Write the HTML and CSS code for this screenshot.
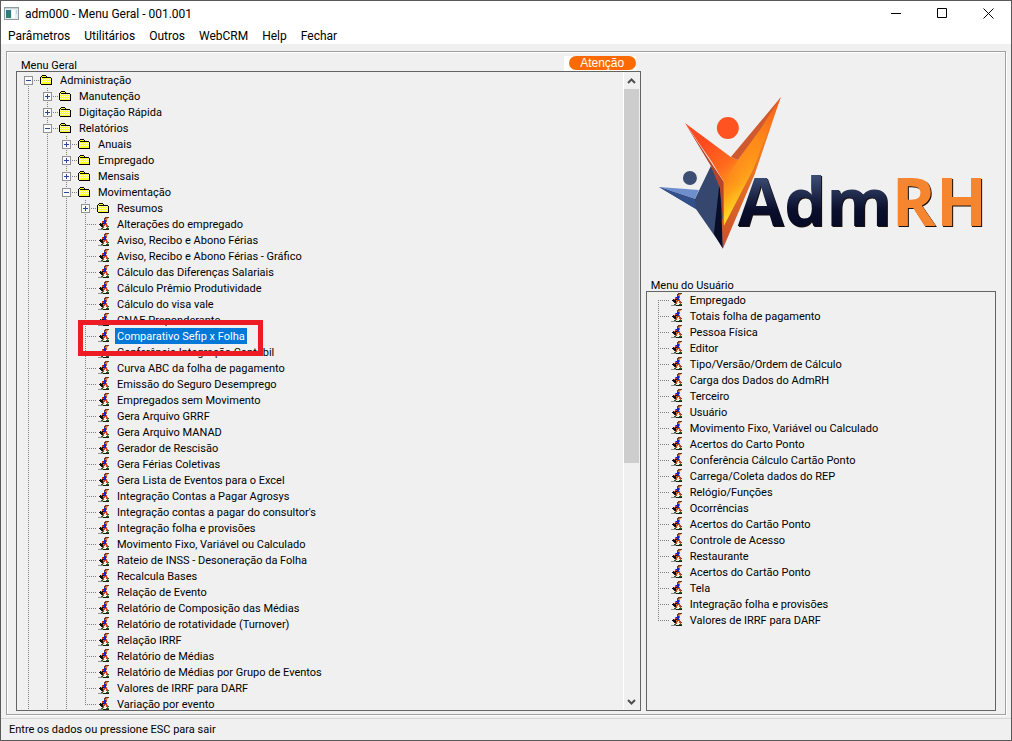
FILE: index.html
```html
<!DOCTYPE html>
<html lang="pt-BR">
<head>
<meta charset="utf-8">
<title>adm000 - Menu Geral - 001.001</title>
<link rel="stylesheet" href="styles.css">
</head>
<body>
<svg class="sprite" aria-hidden="true">
  <symbol id="folder" viewBox="0 0 12 10">
    <path fill="#000" d="M2 0h4v1h1v1h4v1h1v7H1V9H0V2h1V1h1z"/>
    <path fill="#ffff20" d="M2 1h4v1h1v1h4v6H1V2h1z"/>
    <path fill="#000" d="M2 2h5v1H2z"/>
    <path fill="#ffffd0" d="M2 4h1v1H2zM4 4h1v1H4zM6 4h1v1H6zM8 4h1v1H8zM10 4h1v1h-1zM3 5h1v1H3zM5 5h1v1H5zM7 5h1v1H7zM9 5h1v1H9zM2 6h1v1H2zM4 6h1v1H4zM6 6h1v1H6zM8 6h1v1H8zM10 6h1v1h-1zM3 7h1v1H3zM5 7h1v1H5zM7 7h1v1H7zM9 7h1v1H9zM1 3h1v1H1zM1 5h1v1H1zM1 7h1v1H1zM3 3h1v1H3zM5 3h1v1H5zM7 3h1v1H7zM9 3h1v1H9z"/>
  </symbol>
  <symbol id="runner" viewBox="0 0 12 13">
    <path fill="#6a3a18" d="M7 0h4v1H7zM6 1h4v1H6zM6 2h1v1H6z"/>
    <path fill="#e08040" d="M8 1h2v1H8zM7 2h2v1H7zM3 6h1v1H3zM5 7h1v1H5z"/>
    <path fill="#1020e0" d="M6 3h2v1H6zM5 4h3v1H5zM6 5h2v1H6zM6 6h2v1H6z"/>
    <path fill="#e04018" d="M8 3h1v2H8zM4 4h1v2H4zM5 5h1v1H5zM7 7h2v1H7zM8 8h2v1H8zM8 6h1v1H8z"/>
    <path fill="#101010" d="M2 6h1v1H2zM4 6h2v1H4zM1 7h4v1H1zM2 8h3v1H2zM3 9h2v1H3z"/>
    <path fill="#b04a18" d="M6 7h1v2H6zM5 8h1v2H5zM4 10h2v1H4zM8 9h2v1H8zM9 10h1v1H9z"/>
    <path fill="#206020" d="M3 11h2v1H3zM8 11h3v1H8zM10 9h1v1h-1z"/>
    <path fill="#909090" d="M0 12h5v1H0z"/>
    <path fill="#102010" d="M5 12h6v1H5z"/>
  </symbol>
  <symbol id="plus" viewBox="0 0 9 9">
    <path fill="#919191" d="M0 0h9v9H0z"/><path fill="#fafafa" d="M1 1h7v7H1z"/>
    <path fill="#2b4a9c" d="M2 4h5v1H2zM4 2h1v5H4z"/>
  </symbol>
  <symbol id="minus" viewBox="0 0 9 9">
    <path fill="#919191" d="M0 0h9v9H0z"/><path fill="#fafafa" d="M1 1h7v7H1z"/>
    <path fill="#2b4a9c" d="M2 4h5v1H2z"/>
  </symbol>
</svg>
<div class="window">
  <header class="titlebar">
    <svg class="app-icon" viewBox="0 0 15 13" aria-hidden="true">
      <path fill="#8d9aa0" d="M0 0h15v13H0z"/><path fill="#e6edf2" d="M1 2h13v10H1z"/>
      <path fill="#c9d3da" d="M1 1h13v1H1z"/><path fill="#2f7f74" d="M2 3h5v8H2z"/>
      <path fill="#3b6aa0" d="M2 3h2v4H2z"/><path fill="#fff" d="M8 3h3v8H8z"/><path fill="#b8d4ea" d="M12 3h1v4h-1z"/>
    </svg>
    <h1 class="title">adm000 - Menu Geral - 001.001</h1>
    <div class="controls">
      <button type="button" aria-label="Minimizar"><svg viewBox="0 0 11 11"><path d="M0 5.5h10"/></svg></button>
      <button type="button" aria-label="Maximizar"><svg viewBox="0 0 11 11"><path d="M.5 .5h9v9h-9z"/></svg></button>
      <button type="button" aria-label="Fechar janela"><svg viewBox="0 0 11 11"><path d="M.5 .5l10 10M10.500 .5l-10 10"/></svg></button>
    </div>
  </header>
  <nav class="menubar">
    <button type="button">Parâmetros</button><button type="button">Utilitários</button><button type="button">Outros</button><button type="button">WebCRM</button><button type="button">Help</button><button type="button">Fechar</button>
  </nav>
  <main class="frame">
    <section class="general">
      <div class="panel-head">
        <h2>Menu Geral</h2>
        <div class="alert-wrap"><button type="button" class="alert">Atenção</button></div>
      </div>
      <div class="box">
        <div class="viewport">
          <ul class="tree">
            <li class="root"><div class="row"><svg class="exp"><use href="#minus"/></svg><svg class="folder"><use href="#folder"/></svg><span class="label">Administração</span></div>
              <ul>
                <li><div class="row"><svg class="exp"><use href="#plus"/></svg><svg class="folder"><use href="#folder"/></svg><span class="label">Manutenção</span></div></li>
                <li><div class="row"><svg class="exp"><use href="#plus"/></svg><svg class="folder"><use href="#folder"/></svg><span class="label">Digitação Rápida</span></div></li>
                <li><div class="row"><svg class="exp"><use href="#minus"/></svg><svg class="folder"><use href="#folder"/></svg><span class="label">Relatórios</span></div>
                  <ul>
                    <li><div class="row"><svg class="exp"><use href="#plus"/></svg><svg class="folder"><use href="#folder"/></svg><span class="label">Anuais</span></div></li>
                    <li><div class="row"><svg class="exp"><use href="#plus"/></svg><svg class="folder"><use href="#folder"/></svg><span class="label">Empregado</span></div></li>
                    <li><div class="row"><svg class="exp"><use href="#plus"/></svg><svg class="folder"><use href="#folder"/></svg><span class="label">Mensais</span></div></li>
                    <li><div class="row"><svg class="exp"><use href="#minus"/></svg><svg class="folder"><use href="#folder"/></svg><span class="label">Movimentação</span></div>
                      <ul>
                        <li><div class="row"><svg class="exp"><use href="#plus"/></svg><svg class="folder"><use href="#folder"/></svg><span class="label">Resumos</span></div></li>
                        <li><div class="row leaf"><svg class="runner"><use href="#runner"/></svg><span class="label">Alterações do empregado</span></div></li>
                        <li><div class="row leaf"><svg class="runner"><use href="#runner"/></svg><span class="label">Aviso, Recibo e Abono Férias</span></div></li>
                        <li><div class="row leaf"><svg class="runner"><use href="#runner"/></svg><span class="label">Aviso, Recibo e Abono Férias - Gráfico</span></div></li>
                        <li><div class="row leaf"><svg class="runner"><use href="#runner"/></svg><span class="label">Cálculo das Diferenças Salariais</span></div></li>
                        <li><div class="row leaf"><svg class="runner"><use href="#runner"/></svg><span class="label">Cálculo Prêmio Produtividade</span></div></li>
                        <li><div class="row leaf"><svg class="runner"><use href="#runner"/></svg><span class="label">Cálculo do visa vale</span></div></li>
                        <li><div class="row leaf"><svg class="runner"><use href="#runner"/></svg><span class="label">CNAE Preponderante</span></div></li>
                        <li class="marked"><div class="row leaf"><svg class="runner"><use href="#runner"/></svg><span class="label selected">Comparativo Sefip x Folha</span></div></li>
                        <li><div class="row leaf"><svg class="runner"><use href="#runner"/></svg><span class="label">Conferência Integração Contábil</span></div></li>
                        <li><div class="row leaf"><svg class="runner"><use href="#runner"/></svg><span class="label">Curva ABC da folha de pagamento</span></div></li>
                        <li><div class="row leaf"><svg class="runner"><use href="#runner"/></svg><span class="label">Emissão do Seguro Desemprego</span></div></li>
                        <li><div class="row leaf"><svg class="runner"><use href="#runner"/></svg><span class="label">Empregados sem Movimento</span></div></li>
                        <li><div class="row leaf"><svg class="runner"><use href="#runner"/></svg><span class="label">Gera Arquivo GRRF</span></div></li>
                        <li><div class="row leaf"><svg class="runner"><use href="#runner"/></svg><span class="label">Gera Arquivo MANAD</span></div></li>
                        <li><div class="row leaf"><svg class="runner"><use href="#runner"/></svg><span class="label">Gerador de Rescisão</span></div></li>
                        <li><div class="row leaf"><svg class="runner"><use href="#runner"/></svg><span class="label">Gera Férias Coletivas</span></div></li>
                        <li><div class="row leaf"><svg class="runner"><use href="#runner"/></svg><span class="label">Gera Lista de Eventos para o Excel</span></div></li>
                        <li><div class="row leaf"><svg class="runner"><use href="#runner"/></svg><span class="label">Integração Contas a Pagar Agrosys</span></div></li>
                        <li><div class="row leaf"><svg class="runner"><use href="#runner"/></svg><span class="label">Integração contas a pagar do consultor's</span></div></li>
                        <li><div class="row leaf"><svg class="runner"><use href="#runner"/></svg><span class="label">Integração folha e provisões</span></div></li>
                        <li><div class="row leaf"><svg class="runner"><use href="#runner"/></svg><span class="label">Movimento Fixo, Variável ou Calculado</span></div></li>
                        <li><div class="row leaf"><svg class="runner"><use href="#runner"/></svg><span class="label">Rateio de INSS - Desoneração da Folha</span></div></li>
                        <li><div class="row leaf"><svg class="runner"><use href="#runner"/></svg><span class="label">Recalcula Bases</span></div></li>
                        <li><div class="row leaf"><svg class="runner"><use href="#runner"/></svg><span class="label">Relação de Evento</span></div></li>
                        <li><div class="row leaf"><svg class="runner"><use href="#runner"/></svg><span class="label">Relatório de Composição das Médias</span></div></li>
                        <li><div class="row leaf"><svg class="runner"><use href="#runner"/></svg><span class="label">Relatório de rotatividade (Turnover)</span></div></li>
                        <li><div class="row leaf"><svg class="runner"><use href="#runner"/></svg><span class="label">Relação IRRF</span></div></li>
                        <li><div class="row leaf"><svg class="runner"><use href="#runner"/></svg><span class="label">Relatório de Médias</span></div></li>
                        <li><div class="row leaf"><svg class="runner"><use href="#runner"/></svg><span class="label">Relatório de Médias por Grupo de Eventos</span></div></li>
                        <li><div class="row leaf"><svg class="runner"><use href="#runner"/></svg><span class="label">Valores de IRRF para DARF</span></div></li>
                        <li class="last"><div class="row leaf"><svg class="runner"><use href="#runner"/></svg><span class="label">Variação por evento</span></div></li>
                      </ul>
                    </li>
                  </ul>
                </li>
              </ul>
            </li>
          </ul>
        </div>
        <div class="scrollbar">
          <button type="button" aria-label="Rolar para cima"><svg viewBox="0 0 9 6"><path d="M1 5l3.500-3.500L8 5"/></svg></button>
          <div class="track"><div class="thumb"></div></div>
          <button type="button" aria-label="Rolar para baixo"><svg viewBox="0 0 9 6"><path d="M1 1l3.500 3.500L8 1"/></svg></button>
        </div>
      </div>
    </section>
    <section class="user">
      <div class="logo">
        <svg viewBox="0 0 330 160" role="img" aria-label="AdmRH">
          <defs>
            <linearGradient id="gNavy" x1="0" y1="0" x2="0" y2="1"><stop offset=".25" stop-color="#3a4a72"/><stop offset=".6" stop-color="#0a0f2c"/><stop offset="1" stop-color="#03041c"/></linearGradient>
            <linearGradient id="gFire" gradientUnits="userSpaceOnUse" x1="46" y1="50" x2="92" y2="102"><stop offset="0" stop-color="#ff4a20"/><stop offset=".4" stop-color="#ff6a1c"/><stop offset=".75" stop-color="#ff9f1a"/><stop offset="1" stop-color="#ffd420"/></linearGradient>
            <linearGradient id="gArm" gradientUnits="userSpaceOnUse" x1="122" y1="3" x2="82" y2="92"><stop offset="0" stop-color="#f4581f"/><stop offset=".5" stop-color="#ff8a18"/><stop offset="1" stop-color="#ffb81a" stop-opacity="0"/></linearGradient>
            <linearGradient id="gEdge" gradientUnits="userSpaceOnUse" x1="100" y1="60" x2="64" y2="155"><stop offset="0" stop-color="#f07a24"/><stop offset="1" stop-color="#c9502c"/></linearGradient>
          </defs>
          <path fill="#35476e" d="M0 93l36 12 16-33 12 20v62L37 115z"/>
          <path fill="#6f8fcc" d="M0 93l40 3-4 9z"/>
          <path fill="#33508a" d="M0 93l36 12 1 10z"/>
          <path fill="#080d28" d="M61 86l3 69-9-15z"/>
          <circle cx="31" cy="84" r="7" fill="#3d4e74"/>
          <path fill="#b8452a" d="M26 29l39 59v46l-4-40-9-22z"/>
          <path fill="url(#gEdge)" d="M122 3L96 80 64 155l-1-29z"/>
          <path fill="url(#gFire)" d="M122 3L79 66l-7-3-46-34 27 39 12 20v44l29-56z"/>
          <path fill="url(#gArm)" d="M122 3L79 66 65 88v44l29-56z"/>
          <path fill="#cf5a30" d="M122 3L72 63l7 3 22-30z"/>
          <circle cx="69" cy="34" r="11" fill="#ff5422"/>
          <text class="wordmark" x="79" y="132"><tspan fill="url(#gNavy)">Adm</tspan><tspan fill="#f5852f">RH</tspan></text>
        </svg>
      </div>
      <div class="panel-head"><h2>Menu do Usuário</h2></div>
      <div class="box">
        <div class="viewport">
          <ul class="tree">
            <li class="root"><div class="row leaf"><svg class="runner"><use href="#runner"/></svg><span class="label">Empregado</span></div></li>
            <li><div class="row leaf"><svg class="runner"><use href="#runner"/></svg><span class="label">Totais folha de pagamento</span></div></li>
            <li><div class="row leaf"><svg class="runner"><use href="#runner"/></svg><span class="label">Pessoa Física</span></div></li>
            <li><div class="row leaf"><svg class="runner"><use href="#runner"/></svg><span class="label">Editor</span></div></li>
            <li><div class="row leaf"><svg class="runner"><use href="#runner"/></svg><span class="label">Tipo/Versão/Ordem de Cálculo</span></div></li>
            <li><div class="row leaf"><svg class="runner"><use href="#runner"/></svg><span class="label">Carga dos Dados do AdmRH</span></div></li>
            <li><div class="row leaf"><svg class="runner"><use href="#runner"/></svg><span class="label">Terceiro</span></div></li>
            <li><div class="row leaf"><svg class="runner"><use href="#runner"/></svg><span class="label">Usuário</span></div></li>
            <li><div class="row leaf"><svg class="runner"><use href="#runner"/></svg><span class="label">Movimento Fixo, Variável ou Calculado</span></div></li>
            <li><div class="row leaf"><svg class="runner"><use href="#runner"/></svg><span class="label">Acertos do Carto Ponto</span></div></li>
            <li><div class="row leaf"><svg class="runner"><use href="#runner"/></svg><span class="label">Conferência Cálculo Cartão Ponto</span></div></li>
            <li><div class="row leaf"><svg class="runner"><use href="#runner"/></svg><span class="label">Carrega/Coleta dados do REP</span></div></li>
            <li><div class="row leaf"><svg class="runner"><use href="#runner"/></svg><span class="label">Relógio/Funções</span></div></li>
            <li><div class="row leaf"><svg class="runner"><use href="#runner"/></svg><span class="label">Ocorrências</span></div></li>
            <li><div class="row leaf"><svg class="runner"><use href="#runner"/></svg><span class="label">Acertos do Cartão Ponto</span></div></li>
            <li><div class="row leaf"><svg class="runner"><use href="#runner"/></svg><span class="label">Controle de Acesso</span></div></li>
            <li><div class="row leaf"><svg class="runner"><use href="#runner"/></svg><span class="label">Restaurante</span></div></li>
            <li><div class="row leaf"><svg class="runner"><use href="#runner"/></svg><span class="label">Acertos do Cartão Ponto</span></div></li>
            <li><div class="row leaf"><svg class="runner"><use href="#runner"/></svg><span class="label">Tela</span></div></li>
            <li><div class="row leaf"><svg class="runner"><use href="#runner"/></svg><span class="label">Integração folha e provisões</span></div></li>
            <li class="last"><div class="row leaf"><svg class="runner"><use href="#runner"/></svg><span class="label">Valores de IRRF para DARF</span></div></li>
          </ul>
        </div>
      </div>
    </section>
  </main>
  <footer class="status">Entre os dados ou pressione ESC para sair</footer>
</div>
</body>
</html>
```
FILE: styles.css
```css
*, *::before, *::after { box-sizing: border-box; }

body {
  margin: 0;
  color: #000;
  font: 11px/16px Roboto, "Liberation Sans", sans-serif;
}

button {
  padding: 0;
  border: 0;
  background: none;
  color: inherit;
  font: inherit;
}

h1, h2, ul { margin: 0; padding: 0; font: inherit; list-style: none; }

.sprite { position: absolute; width: 0; height: 0; }

.window {
  display: flex;
  flex-direction: column;
  height: 100vh;
  border: 1px solid #595959;
  background: #f0f0f0;
}

.titlebar {
  display: flex;
  align-items: center;
  height: 25px;
  padding-left: 3px;
  background: #fff;
}
.app-icon { width: 15px; height: 13px; }
.title { flex: 1; margin-left: 6px; font-size: 12px; }
.controls { display: flex; height: 100%; }
.controls button { width: 46px; display: flex; align-items: center; justify-content: center; }
.controls svg { width: 11px; height: 11px; fill: none; stroke: #000; }

.menubar {
  display: flex;
  height: 18px;
  background: #fff;
  font-size: 12px;
  line-height: 18px;
}
.menubar button { padding: 1px 7px 0; }

.frame {
  flex: 1;
  min-height: 0;
  display: flex;
  gap: 5px;
  margin: 7px 5px 3px;
  padding: 2px 9px 3px;
  border: 1px solid #a0a0a0;
  box-shadow: inset 1px 1px #fff, 1px 1px #fff;
}

.general { flex: 626; display: flex; flex-direction: column; min-width: 0; }
.user { flex: 351; display: flex; flex-direction: column; min-width: 0; }

.panel-head { display: flex; align-items: flex-end; justify-content: space-between; height: 17px; padding: 0 5px; line-height: 11px; }
.alert-wrap { padding: 0 0 1px 5px; background: #fff; }
.alert {
  display: block;
  width: 67px;
  height: 14px;
  border-radius: 7px;
  background: #ff6a00;
  color: #fff;
  font: 12px/14px "Liberation Sans", Arial, sans-serif;
}

.box { flex: 1; min-height: 0; display: flex; border: 1px solid #646464; }
.viewport { flex: 1; min-width: 0; overflow: hidden; padding-left: 7px; }

.tree li {
  position: relative;
  background: repeating-linear-gradient(#808080 0 1px, transparent 1px 2px) 4px 0 / 1px 100% no-repeat;
}
.tree li.root { background-position: 4px 8px; }
.tree li.last { background-size: 1px 9px; }
.tree ul { margin-left: 19px; }

.row {
  display: flex;
  align-items: center;
  height: 16px;
  background: repeating-linear-gradient(90deg, #808080 0 1px, transparent 1px 2px) 4px 8px / 11px 1px no-repeat;
}
.exp { width: 9px; height: 9px; margin: 1px 7px 0 0; }
.folder { width: 12px; height: 10px; margin-right: 6px; }
.runner { width: 12px; height: 13px; margin: 0 5px 1px 17px; }
.label { padding: 2px 2px 0; line-height: 14px; white-space: nowrap; }
.selected { background: #0078d7; color: #fff; }

.marked::after {
  content: "";
  position: absolute;
  z-index: 1;
  top: -8px;
  left: -3px;
  width: 185px;
  height: 36px;
  border: 5px solid #ed1c24;
}

.scrollbar { width: 17px; display: flex; flex-direction: column; padding-right: 1px; border-left: 1px solid #fff; }
.scrollbar button { height: 17px; display: flex; align-items: center; justify-content: center; }
.scrollbar svg { width: 9px; height: 6px; fill: none; stroke: #505050; stroke-width: 2; }
.track { flex: 1; }
.thumb { height: 62%; background: #cdcdcd; }

.logo { height: 220px; padding: 40px 8px 0 13px; }
.logo svg { display: block; width: 100%; height: 160px; overflow: visible; }
.wordmark { font: 700 67px "Open Sans", sans-serif; filter: drop-shadow(1px 1px 0 #1a1010); }

.status {
  height: 22px;
  padding: 1px 8px 0;
  border-top: 1px solid #d7d7d7;
  line-height: 20px;
}
```
